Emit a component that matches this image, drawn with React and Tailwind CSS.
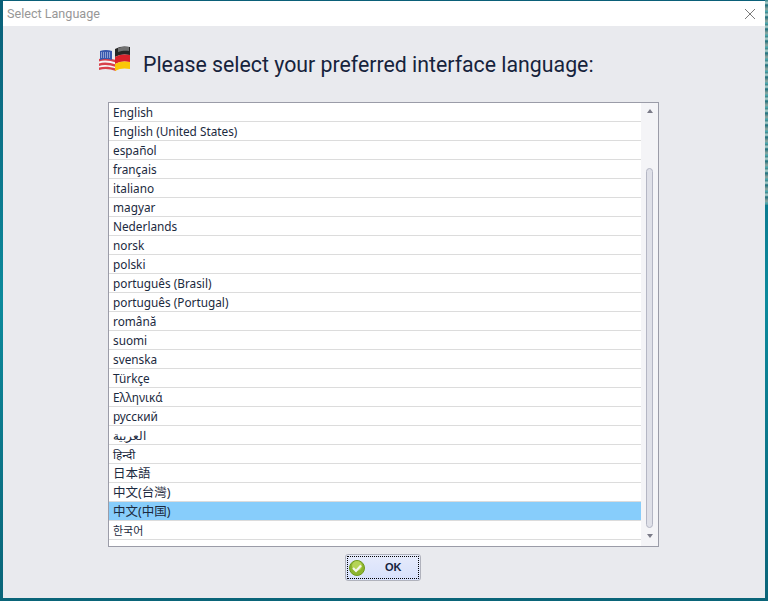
const languages = [
  "English",
  "English (United States)",
  "español",
  "français",
  "italiano",
  "magyar",
  "Nederlands",
  "norsk",
  "polski",
  "português (Brasil)",
  "português (Portugal)",
  "română",
  "suomi",
  "svenska",
  "Türkçe",
  "Ελληνικά",
  "русский",
  "العربية",
  "हिन्दी",
  "日本語",
  "中文(台灣)",
  "中文(中国)",
  "한국어",
];

const cjk = ["日本語", "中文(台灣)", "中文(中国)"];

const FlagIcon = () => (
  <svg width="34" height="27" viewBox="0 0 34 27" className="shrink-0 self-start">
    <path d="M1 13c5-2 10-1 17 1v11c-6-2-11-3-17-1z" fill="#d8404a" />
    <path d="M1 15.500c5-2 11-1 17 1v2c-6-2-12-3-17-1zM1 20c5-2 11-1 17 1v1.500c-6-2-12-2.500-17-1z" fill="#f6f6f6" />
    <path d="M2 5c4-1.500 8-1.500 12 0v9c-4-1.500-8-1.500-12 0z" fill="#3756ad" />
    <path d="M3 7h10M3 9h10M3 11h10" stroke="#e4e9fa" strokeWidth="1" strokeDasharray="1 1" />
    <path d="M17 3c5-3 10-3 15-2v8c-5-1-10-1-15 2z" fill="#262626" />
    <path d="M20 2c3-1 7-1.500 11-1v4c-4-.5-8 0-11 1z" fill="#707070" />
    <path d="M17 11c5-3 10-3 15-2v7c-5-1-10-1-15 2z" fill="#d8212a" />
    <path d="M17 18c5-3 10-3 15-2v7c-5-1-10-1-15 2z" fill="#fbc707" />
  </svg>
);

const CheckIcon = () => (
  <svg width="16" height="16" viewBox="0 0 16 16" className="shrink-0">
    <circle cx="8" cy="8" r="7.500" fill="#8db52e" stroke="#6f9a1e" />
    <circle cx="8" cy="6" r="5" fill="#b5d456" />
    <path d="M4 8l3 3 5-5.500" fill="none" stroke="#f4f6ee" strokeWidth="2.200" />
  </svg>
);

export default function App() {
  return (
    <div className="relative h-[601px] w-[768px] overflow-hidden bg-gradient-to-b from-[#0a5f78] via-[#0c8a9c] to-[#0a6478] pt-px pl-[3px] pr-[3px] pb-[3px]">
      <div className="absolute top-0 right-0 h-[205px] w-[3px] bg-[repeating-linear-gradient(180deg,#2f7f86_0px,#b7d4cf_3px,#1d6f7d_5px,#8fa59e_9px,#39a5b0_12px)]" />
      <div className="flex h-full flex-col bg-[#e9eaee] font-['Noto_Sans','Noto_Sans_CJK_SC',sans-serif]">
        <div className="flex h-[25px] items-center justify-between bg-white pl-1 pr-[9px]">
          <span className="pt-px font-['Roboto',sans-serif] text-[12.600px] text-[#979797]">Select Language</span>
          <svg width="12" height="12" viewBox="0 0 12 12">
            <path d="M1 1l10 10M11 1L1 11" stroke="#7a7a7a" strokeWidth="1" />
          </svg>
        </div>

        <div className="mt-[20px] flex h-[36px] items-center pl-[95px]">
          <FlagIcon />
          <h1 className="mt-[2px] ml-[11px] font-['Roboto',sans-serif] text-[21.300px] font-normal text-[#16233c]">
            Please select your preferred interface language:
          </h1>
        </div>

        <div className="mt-[20px] ml-[105px] flex h-[445px] w-[551px] border border-[#9b9ca8] bg-white">
          <ul className="flex-1">
            {languages.map((lang) => (
              <li
                key={lang}
                className={`flex h-[19px] items-center border-b border-[#dcdcdc] pt-[2px] pl-1 text-[#1b2a40] ${
                  cjk.includes(lang) ? "text-[12.500px]" : lang === "한국어" ? "text-[11px]" : "text-[11.800px]"
                } ${lang === "中文(中国)" ? "bg-[#87cdfb]" : ""}`}
              >
                {lang}
              </li>
            ))}
          </ul>
          <div className="flex w-[17px] flex-col items-center bg-[#f4f4f7]">
            <div className="mt-[6px] h-0 w-0 border-x-[3px] border-b-[4px] border-x-transparent border-b-[#7b7b88]" />
            <div className="mt-[55px] h-[360px] w-[7px] rounded-full border border-[#b4b6c4] bg-[#dfe0e8]" />
            <div className="mt-[6px] h-0 w-0 border-x-[3px] border-t-[4px] border-x-transparent border-t-[#7b7b88]" />
          </div>
        </div>

        <div className="mt-[7px] flex justify-center">
          <button className="mr-[2px] h-[27px] w-[76px] rounded-[3px] border border-[#b0b2bc] bg-gradient-to-b from-[#e6ebfb] to-[#d6e0fb] p-px">
            <span className="flex h-full items-center border border-dotted border-black pl-px">
              <CheckIcon />
              <span className="ml-[20px] font-['Liberation_Sans',sans-serif] text-[11px] font-bold text-[#16233c]">OK</span>
            </span>
          </button>
        </div>
      </div>
    </div>
  );
}
